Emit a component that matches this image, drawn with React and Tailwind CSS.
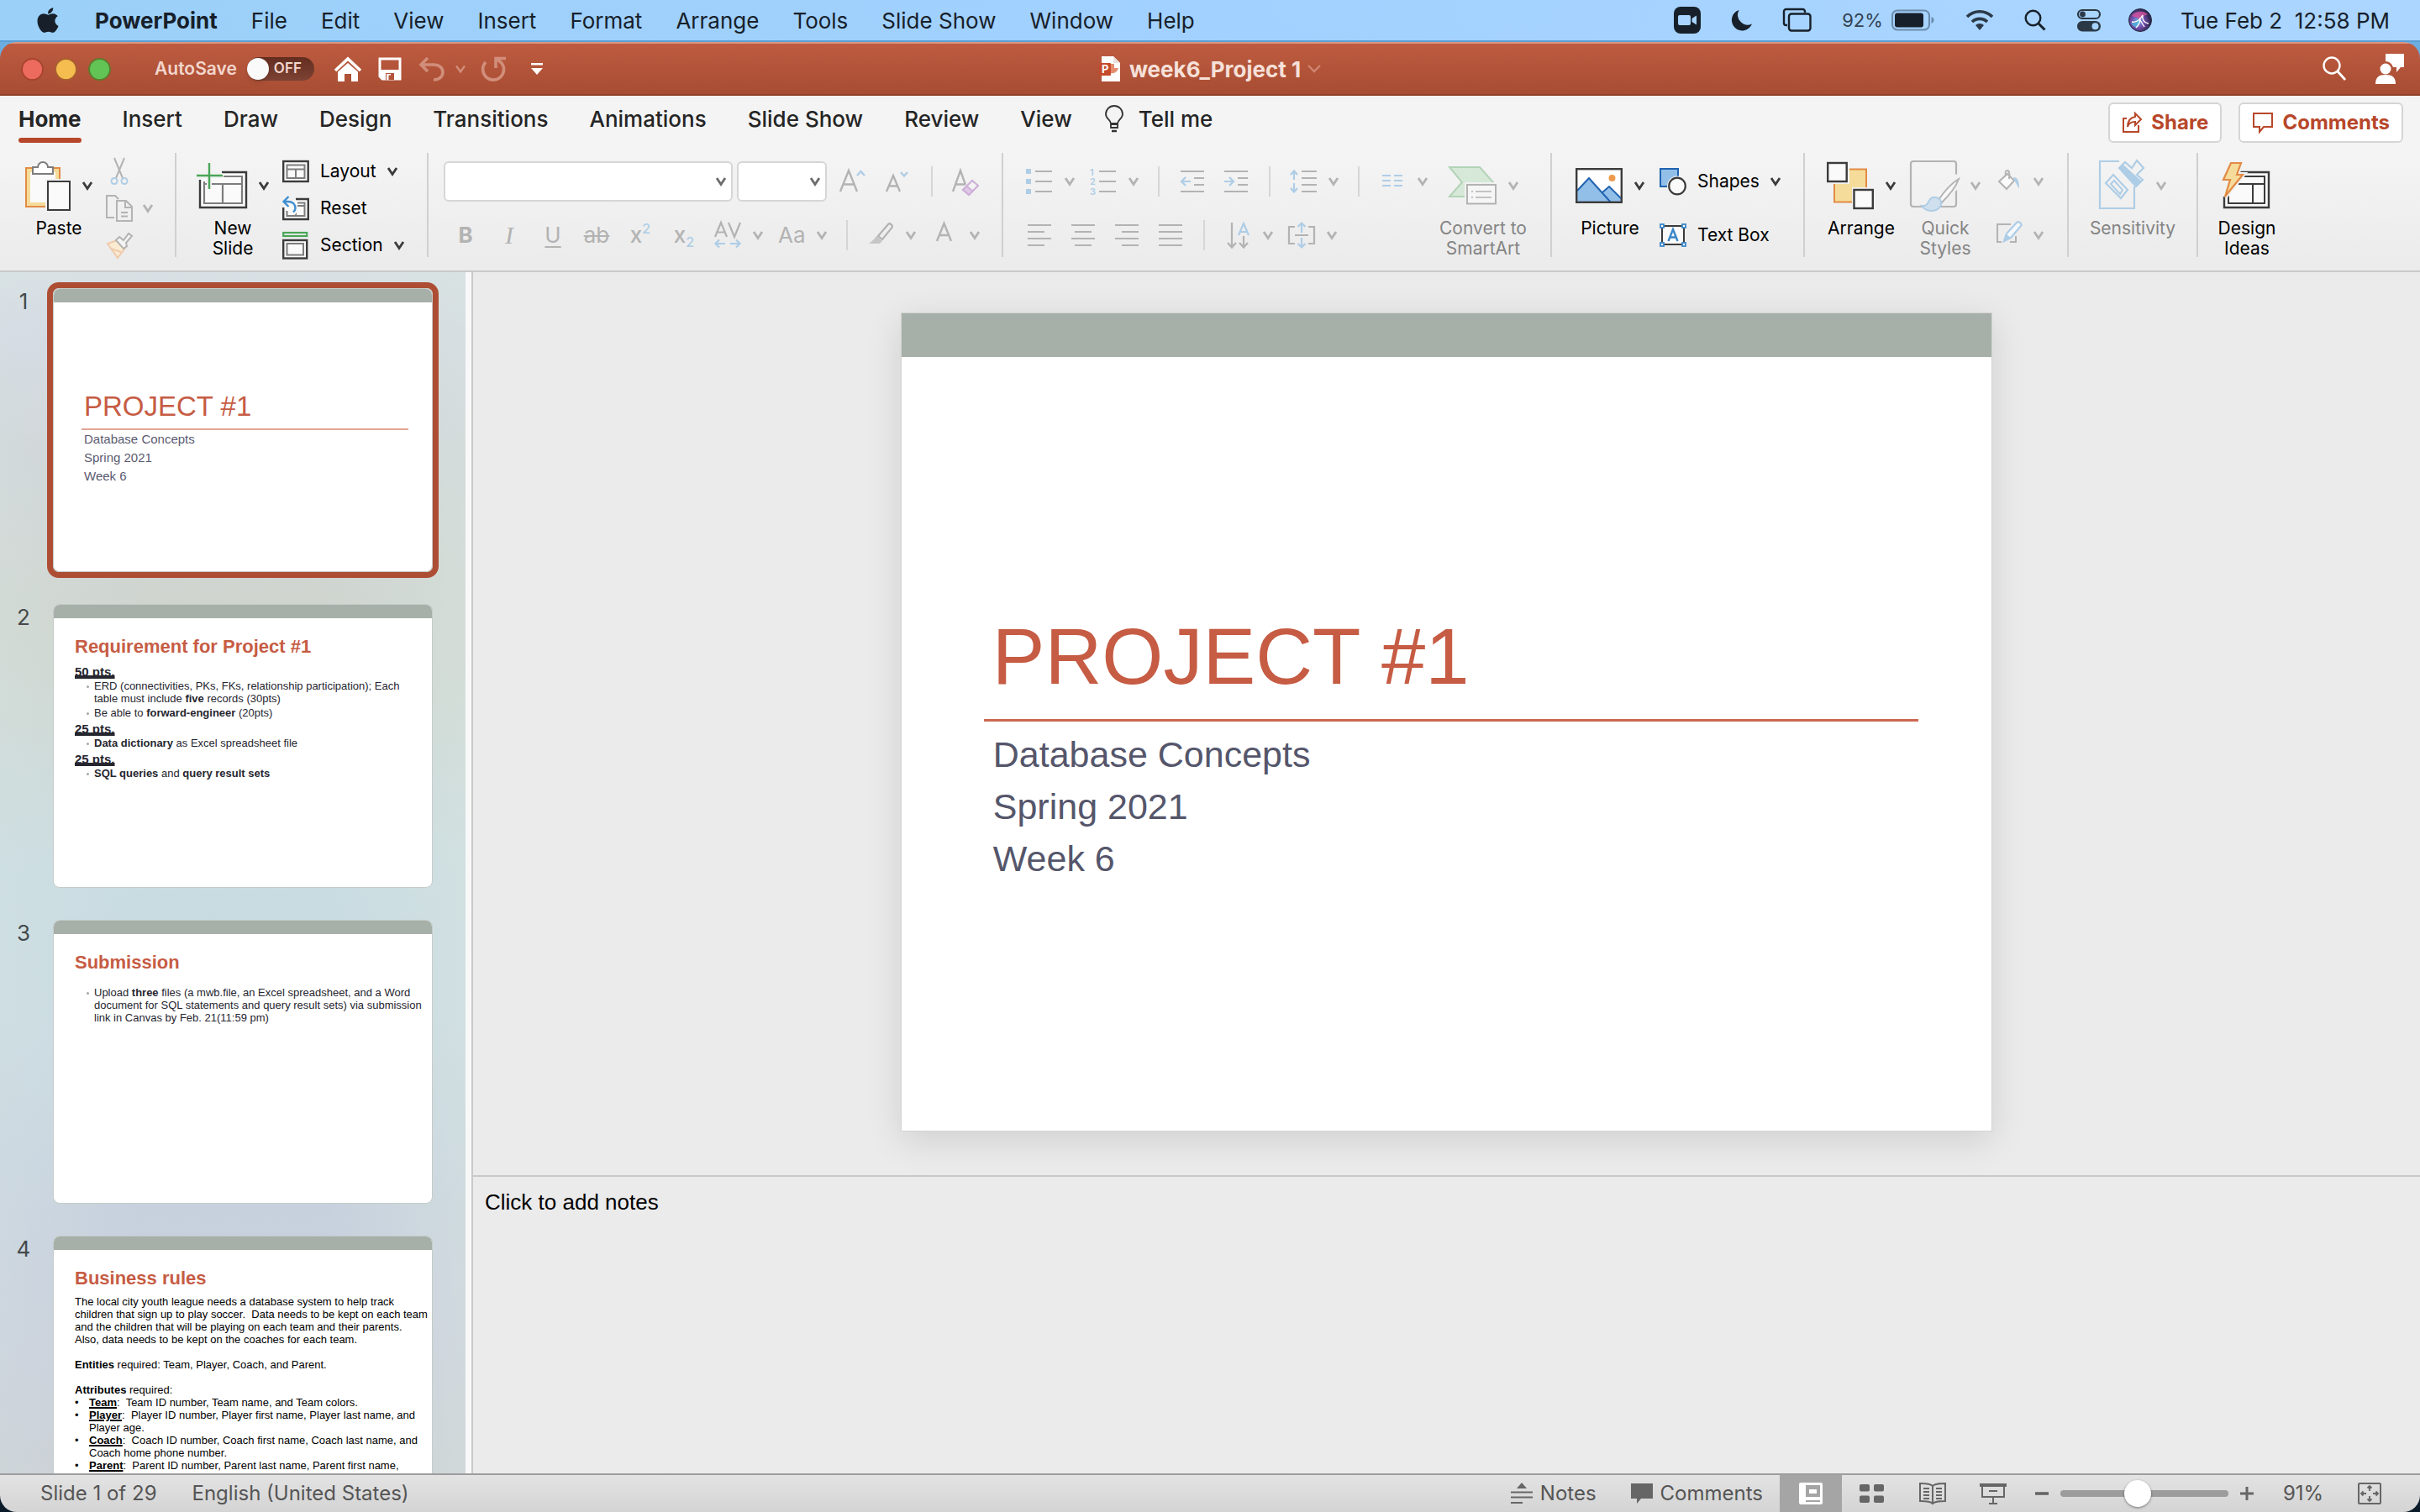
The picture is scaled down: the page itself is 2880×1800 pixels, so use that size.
import React from "react";
import { FaApple } from "react-icons/fa";

const GRAY = "#b3b3b3";
const PALE = "#aecde6";
const DARK = "#3b3b3b";

function Svg({ w = 32, h = 32, children, className = "" }) {
  return (
    <svg
      width={w}
      height={h}
      viewBox={`0 0 ${w} ${h}`}
      fill="none"
      aria-hidden="true"
      className={"shrink-0 overflow-visible " + className}
    >
      {children}
    </svg>
  );
}

function Chevron({ color = GRAY }) {
  return (
    <Svg w={12} h={10}>
      <path d="M1 1 6 8.500 11 1" stroke={color} strokeWidth="2.800" />
    </Svg>
  );
}

/* ---------- menu bar ---------- */

const MENUS = ["File", "Edit", "View", "Insert", "Format", "Arrange", "Tools", "Slide Show", "Window", "Help"];

function MenuBar() {
  return (
    <header className="flex h-[50px] shrink-0 items-center border-b-2 border-[#5b9fd6] bg-gradient-to-r from-[#9bd0f8] via-[#a2d1ff] to-[#acd6ff] pr-9 text-[26px] text-[#17202a]">
      <button aria-label="Apple menu" className="ml-[41px] flex w-8 justify-center">
        <FaApple size={34} />
      </button>
      <nav className="ml-10 flex items-center gap-10">
        <button className="font-bold">PowerPoint</button>
        {MENUS.map((m) => (
          <button key={m}>{m}</button>
        ))}
      </nav>
      <div className="ml-auto flex items-center">
        <Svg w={32} h={32}>
          <rect x="0" y="0" width="32" height="32" rx="8" fill="#17202a" />
          <rect x="5" y="10" width="15" height="12" rx="2" fill="#a8d4ff" />
          <path d="M21.500 14 27 10.500v11L21.500 18z" fill="#a8d4ff" />
        </Svg>
        <Svg w={26} h={26} className="ml-9">
          <path d="M9.500 1A12.500 12.500 0 1 0 25 17.500 12 12 0 0 1 9.500 1z" fill="#17202a" />
        </Svg>
        <Svg w={34} h={28} className="ml-9">
          <path d="M5 20H3.500A2.500 2.500 0 0 1 1 17.500V3.500A2.500 2.500 0 0 1 3.500 1h20A2.500 2.500 0 0 1 26 3.500V5" stroke="#17202a" strokeWidth="2.400" />
          <rect x="7" y="6.500" width="25.500" height="20" rx="3" stroke="#17202a" strokeWidth="2.400" />
        </Svg>
        <span className="ml-9 text-[22px] text-[#334252]">92%</span>
        <Svg w={52} h={26} className="ml-2.5">
          <rect x="1" y="1.500" width="44" height="23" rx="6" stroke="#6a8bab" strokeWidth="2" />
          <rect x="4" y="4.500" width="34" height="17" rx="3" fill="#17202a" />
          <path d="M47.500 9v8c2-.8 3-2.300 3-4s-1-3.200-3-4z" fill="#6a8bab" />
        </Svg>
        <Svg w={34} h={26} className="ml-9">
          <path d="M2 9a21 21 0 0 1 30 0M8 15a13 13 0 0 1 18 0" stroke="#2b3947" strokeWidth="3.600" />
          <path d="M17 25l-5-6a7 7 0 0 1 10 0z" fill="#2b3947" />
        </Svg>
        <Svg w={26} h={26} className="ml-9">
          <circle cx="10.500" cy="10.500" r="8.800" stroke="#17202a" strokeWidth="2.400" />
          <path d="M17 17l7.500 7.500" stroke="#17202a" strokeWidth="3" />
        </Svg>
        <Svg w={30} h={28} className="ml-9">
          <rect x="2" y="2" width="26" height="10" rx="5" stroke="#2b3947" strokeWidth="2.200" />
          <circle cx="7.500" cy="7" r="3.400" fill="#2b3947" />
          <rect x="1" y="15" width="28" height="12.500" rx="6.200" fill="#2b3947" />
          <circle cx="22.500" cy="21.200" r="4" fill="#a8d4ff" />
        </Svg>
        <svg width="28" height="28" viewBox="0 0 28 28" aria-hidden="true" className="ml-8 shrink-0">
          <defs>
            <radialGradient id="siri" cx="40%" cy="55%" r="60%">
              <stop offset="0" stopColor="#5fb8e8" />
              <stop offset="0.45" stopColor="#7a4fb0" />
              <stop offset="1" stopColor="#1f2142" />
            </radialGradient>
          </defs>
          <circle cx="14" cy="14" r="13.500" fill="url(#siri)" stroke="#2a2c45" />
          <path d="M4 9c4-6 13-7 19-2-4 1-7 3-9 7-3-3-6-4-10-5z" fill="#d5529b" opacity="0.8" />
          <path d="M3 17c4 1 7 0 11-3l-4 9c-4-1-6-3-7-6z" fill="#4cc3e6" opacity="0.7" />
          <path d="M4 16c5 1 9-1 13-8-1 6 2 9 7 10M9 23c4-3 5-7 5-12M14 14l5 8" stroke="#fff" strokeWidth="1.400" fill="none" />
        </svg>
        <span className="ml-[34px] whitespace-pre">Tue Feb 2  12:58 PM</span>
      </div>
    </header>
  );
}

/* ---------- title bar ---------- */

function TitleBar() {
  return (
    <div className="grid h-16 shrink-0 grid-cols-[1fr_auto_1fr] items-center border-t-2 border-b-2 border-t-[#dc9580] border-b-[#8f412b] bg-gradient-to-b from-[#be5b40] to-[#a74d33]">
      <div className="flex items-center">
        <div className="ml-[25px] flex gap-[13px]">
          <button aria-label="Close" className="size-[27px] rounded-full border-2 border-[#a8442f] bg-[#ed6a5e]" />
          <button aria-label="Minimize" className="size-[27px] rounded-full border-2 border-[#a8602f] bg-[#f5bd4f]" />
          <button aria-label="Zoom window" className="size-[27px] rounded-full border-2 border-[#5f7a2d] bg-[#61c454]" />
        </div>
        <label className="ml-[52px] flex items-center gap-3 text-[21px] font-semibold text-[#f3d6cd]">
          AutoSave
          <span className="flex h-7 w-20 items-center rounded-full bg-gradient-to-b from-[#632d20] to-[#7d4334]">
            <input type="checkbox" role="switch" className="size-[26px] appearance-none rounded-full bg-[#fafafa] shadow-md" />
            <span className="ml-1.5 text-[17px] font-semibold">OFF</span>
          </span>
        </label>
        <button aria-label="Home" className="ml-[23px]">
          <Svg w={34} h={30}>
            <path d="M2 17 17 3l15 14" stroke="#fff" strokeWidth="3.600" />
            <path d="M5 18.500 17 8l12 10.500V30h-8v-9h-8v9H5z" fill="#fff" />
          </Svg>
        </button>
        <button aria-label="Save" className="ml-[19px]">
          <Svg w={28} h={28}>
            <path d="M2 2h24v24H5l-3-3z" stroke="#fff" strokeWidth="3" />
            <path d="M2 15h24v11H5l-3-3z" fill="#fff" />
            <path d="M9 19h10v8H9z" fill="#b3543a" />
            <path d="M10 20h5v7h-5z" fill="#fff" />
            <path d="M12.500 21.500h3.500V27h-3.500z" fill="#b3543a" />
          </Svg>
        </button>
        <button aria-label="Undo" className="ml-5 flex items-center gap-3">
          <Svg w={32} h={30}>
            <path d="M11 2 3 10l8 8M3 10h15c7 0 11 4 11 9s-4 9-11 9" stroke="#d18e7b" strokeWidth="3.600" />
          </Svg>
          <Svg w={12} h={10}>
            <path d="M1 1.500 6 8.500 11 1.500" stroke="#d18e7b" strokeWidth="2.400" />
          </Svg>
        </button>
        <button aria-label="Redo" className="ml-[18px]">
          <Svg w={32} h={30}>
            <path d="M6 7A12.500 12.500 0 1 0 25 8L19 3" stroke="#d18e7b" strokeWidth="3.600" />
            <path d="M18 14V2.500h12" stroke="#d18e7b" strokeWidth="3.600" />
          </Svg>
        </button>
        <button aria-label="Customize toolbar" className="ml-[27px]">
          <Svg w={16} h={16}>
            <path d="M1 7h14l-7 8z" fill="#fff" />
            <rect x="1" y="1" width="14" height="2.500" fill="#fff" />
          </Svg>
        </button>
      </div>
      <div className="flex items-center">
        <Svg w={26} h={30}>
          <path d="M3 0h14l8 8v22H3z" fill="#fdfdfd" />
          <path d="M17 0v8h8z" fill="#e7e0dd" />
          <path d="M13 9v11a8 8 0 0 0 10-6h-5V9z" fill="#e58c6f" />
          <rect x="0" y="8" width="14" height="15" rx="1" fill="#c54a2b" />
          <text x="3" y="20" fontSize="13" fontWeight="700" fill="#fff" fontFamily="Inter, sans-serif">P</text>
        </Svg>
        <h1 className="ml-2.5 text-[26px] font-bold text-[#f6e0d9]">week6_Project 1</h1>
        <Svg w={16} h={10} className="ml-2">
          <path d="M1 1 8 8l7-7" stroke="#cf8672" strokeWidth="2.400" />
        </Svg>
      </div>
      <div className="flex items-center justify-end gap-[34px] pr-[18px]">
        <button aria-label="Search">
          <Svg w={28} h={30}>
            <circle cx="11" cy="11" r="9.500" stroke="#fff" strokeWidth="2.400" />
            <path d="M18 18l9 10" stroke="#fff" strokeWidth="2.800" />
          </Svg>
        </button>
        <button aria-label="Presence">
          <Svg w={36} h={36}>
            <path d="M13 0h22v16h-4l-5 6v-6h-4a9 9 0 0 0-9-7z" fill="#fff" />
            <circle cx="13" cy="18" r="6.500" fill="#fff" />
            <path d="M1 36c0-8 4-11 12-11s12 3 12 11z" fill="#fff" />
          </Svg>
        </button>
      </div>
    </div>
  );
}

/* ---------- ribbon tabs ---------- */

const TABS = ["Insert", "Draw", "Design", "Transitions", "Animations", "Slide Show", "Review", "View"];

function TabBar() {
  return (
    <div className="flex h-[68px] shrink-0 items-start bg-[#f4f4f4] pr-5 pl-[22px] text-[26px]">
      <nav className="flex gap-[49px] pt-2 text-[#252525]">
        <button className="flex flex-col gap-0.5 font-bold">
          <span className="leading-10">Home</span>
          <span className="h-1.5 w-full rounded-full bg-[#b7472a]" />
        </button>
        {TABS.map((t) => (
          <button key={t} className="h-10 leading-10 font-medium">
            {t}
          </button>
        ))}
      </nav>
      <button className="ml-[38px] flex items-center gap-[17px] pt-2 leading-10 font-medium text-[#252525]">
        <Svg w={24} h={32}>
          <path d="M8 21c0-4-6-6-6-11a10 10 0 0 1 20 0c0 5-6 7-6 11z" stroke="#333" strokeWidth="1.800" />
          <path d="M8 22h8v4H8z" stroke="#333" strokeWidth="1.800" />
          <path d="M9 30h6" stroke="#333" strokeWidth="2.400" />
        </Svg>
        Tell me
      </button>
      <div className="ml-auto flex gap-5 pt-2 font-bold text-[#b7472a]">
        <button className="flex h-12 items-center gap-2.5 rounded-md border-2 border-[#d5d5d5] bg-white px-3.5 text-[24px]">
          <Svg w={25} h={26}>
            <path d="M6 8H2v16h18v-8" stroke="#b7472a" strokeWidth="2" />
            <path d="M16 2l7 7-7 7v-4c-5 0-8 2-9 6 0-7 3-11 9-12z" stroke="#b7472a" strokeWidth="2" />
          </Svg>
          Share
        </button>
        <button className="flex h-12 items-center gap-2.5 rounded-md border-2 border-[#d5d5d5] bg-white px-3.5 text-[24px]">
          <Svg w={26} h={26}>
            <path d="M2 2h22v16H14l-5 6v-6H2z" stroke="#b7472a" strokeWidth="2" />
          </Svg>
          Comments
        </button>
      </div>
    </div>
  );
}

/* ---------- ribbon building blocks ---------- */

function Divider() {
  return <div className="h-[124px] w-0.5 shrink-0 bg-[#d0d0d0]" />;
}

function SmallDivider() {
  return <div className="mx-[23px] h-9 w-0.5 shrink-0 bg-[#d6d6d6]" />;
}

function Big({ icon, label, drop = true, disabled, className }) {
  return (
    <button
      className={
        "flex shrink-0 flex-col items-center text-[21px] leading-6 " +
        (disabled ? "text-[#848484] " : "text-black ") +
        className
      }
    >
      <span className="flex h-[78px] items-center gap-3.5">
        {icon}
        {drop && <Chevron color={disabled ? GRAY : DARK} />}
      </span>
      <span className="whitespace-pre">{label}</span>
    </button>
  );
}

function Row({ icon, label, drop, className = "h-11" }) {
  return (
    <button className={"flex items-center gap-[13px] text-[21px] text-black " + className}>
      {icon}
      {label}
      {drop && <Chevron color={DARK} />}
    </button>
  );
}

function Tool({ name, children, className = "w-8" }) {
  return (
    <button aria-label={name} className={"flex h-8 shrink-0 items-center justify-center " + className}>
      {children}
    </button>
  );
}

function Drop({ name, children }) {
  return (
    <button aria-label={name} className="flex h-8 shrink-0 items-center gap-[14px]">
      {children}
      <Chevron />
    </button>
  );
}

function Combo({ name, className }) {
  return (
    <div className={"grid h-12 shrink-0 items-center " + className}>
      <select
        aria-label={name}
        className="col-start-1 row-start-1 h-12 w-full appearance-none rounded-md border-2 border-[#d6d6d6] bg-white px-2 text-[21px]"
      >
        <option value=""></option>
      </select>
      <span className="pointer-events-none col-start-1 row-start-1 mr-2 justify-self-end">
        <Chevron color="#6b6b6b" />
      </span>
    </div>
  );
}

/* ---------- ribbon icons ---------- */

const PasteIcon = (
  <Svg w={54} h={60}>
    <rect x="1" y="9" width="40" height="46" fill="#f6dc9a" stroke="#e28b45" strokeWidth="2" />
    <path d="M6 14h30v36H6z" fill="#fafafa" />
    <path d="M9 8h6a6 6 0 0 1 12 0h6v8H9z" fill="#fff" stroke="#7d7d7d" strokeWidth="2" />
    <rect x="24" y="22" width="30" height="38" fill="#f2f2f2" />
    <rect x="27" y="25" width="26" height="34" fill="#fafafa" stroke={DARK} strokeWidth="2" />
  </Svg>
);
const CutIcon = (
  <Svg>
    <path d="M10 0l10 24M22 0L12 24" stroke={GRAY} strokeWidth="2" />
    <circle cx="10" cy="27.500" r="3.500" stroke={PALE} strokeWidth="2" />
    <circle cx="22" cy="27.500" r="3.500" stroke={PALE} strokeWidth="2" />
  </Svg>
);
const CopyIcon = (
  <Svg>
    <path d="M10 27H1V1h10l4 4" stroke={GRAY} strokeWidth="2" />
    <path d="M13 7h11l7 7v17H13zM23 7v8h8M18 21h8M18 25.500h8" stroke={GRAY} strokeWidth="2" />
  </Svg>
);
const PainterIcon = (
  <Svg>
    <path d="M2 14l12-4 9 9-9 12z" fill="#faebd2" stroke="#efcbac" strokeWidth="2" />
    <path d="M6 20l12 4" stroke="#efcbac" strokeWidth="2" />
    <path d="M12 10l4-4 5 4 6-8 4 3-7 8 1 4-4 3z" fill="#f4f4f4" stroke={GRAY} strokeWidth="2" />
  </Svg>
);
const NewSlideIcon = (
  <Svg w={60} h={54}>
    <path d="M30 11h29v42H4V20" fill="#fafafa" stroke={DARK} strokeWidth="2.400" />
    <path d="M32 16h22v32H9V22M9 25h45M31 25v23" stroke="#7d7d7d" strokeWidth="2.200" />
    <path d="M15 0v31M0 15h31" stroke="#f2f2f2" strokeWidth="6" />
    <path d="M15 0v31M0 15h31" stroke="#4aa658" strokeWidth="2.400" />
  </Svg>
);
const LayoutIcon = (
  <Svg w={32} h={28}>
    <rect x="1.200" y="2" width="29.500" height="24" fill="#fafafa" stroke={DARK} strokeWidth="2.400" />
    <path d="M5.500 6.500h21v15.500h-21zM5.500 11.500h21M16 11.500V22" stroke="#7d7d7d" strokeWidth="2" />
  </Svg>
);
const ResetIcon = (
  <Svg w={32} h={32}>
    <path d="M16 5h14.800v24H1.200V15" fill="#fafafa" stroke={DARK} strokeWidth="2.400" />
    <path d="M18 9.500h8.500V25h-21v-6M18 13h8M16 19v6" stroke="#7d7d7d" strokeWidth="2" />
    <path d="M2 8h5c6 0 8.500 4 8.500 8 0 2-1 4-3 6" stroke="#f4f4f4" strokeWidth="6" />
    <path d="M7.500 2 1.500 8l6 6M2 8h5c6 0 8.500 4 8.500 8 0 2-1 3-2.500 4.500" stroke="#3f8fd2" strokeWidth="2.400" />
  </Svg>
);
const SectionIcon = (
  <Svg w={32} h={34}>
    <rect x="1.200" y="2" width="28" height="4" stroke="#4aa658" strokeWidth="2.200" />
    <rect x="1.200" y="11" width="28" height="21.500" fill="#fafafa" stroke={DARK} strokeWidth="2.400" />
    <rect x="5.500" y="15" width="19.500" height="13.500" stroke="#7d7d7d" strokeWidth="2" />
  </Svg>
);
const SmartArtIcon = (
  <Svg w={58} h={46}>
    <path d="M2 1h36l16 18-14 17H2l15-17z" fill="#d6e9d8" stroke="#b2d3b7" strokeWidth="2" />
    <rect x="20" y="19" width="38" height="27" fill="#f1f1f1" />
    <rect x="23" y="22" width="34" height="22.500" fill="#f6f6f6" stroke={GRAY} strokeWidth="2" />
    <path d="M28 30h2M33 30h19M28 37h2M33 37h19" stroke="#c2c2c2" strokeWidth="2" />
  </Svg>
);
const PictureIcon = (
  <Svg w={56} h={42}>
    <rect x="1.200" y="1.200" width="53.600" height="39.600" fill="#fff" />
    <path d="M2 27 16 12l25 29H2z" fill="#92bfe8" />
    <path d="M32 29l8-7 14 14v5H42z" fill="#92bfe8" />
    <path d="M2 27 16 12l26 29M32 29l8-7 14 14" stroke="#1f63b0" strokeWidth="2" />
    <circle cx="43.500" cy="12" r="4" fill="#ee9a4d" />
    <rect x="1.200" y="1.200" width="53.600" height="39.600" stroke={DARK} strokeWidth="2.400" />
  </Svg>
);
const ShapesIcon = (
  <Svg w={32} h={34}>
    <rect x="1" y="2" width="21" height="21" fill="#92bfe8" stroke="#1f63b0" strokeWidth="2" />
    <circle cx="21" cy="22.500" r="12" fill="#f2f2f2" />
    <circle cx="21" cy="22.500" r="9.800" fill="#fafafa" stroke={DARK} strokeWidth="2.200" />
  </Svg>
);
const TextBoxIcon = (
  <Svg w={32} h={30}>
    <rect x="3" y="4" width="26" height="22" fill="#fafafa" stroke={DARK} strokeWidth="2" />
    <path d="M10.500 22 16 8l5.500 14M12.500 17.500h7" stroke="#3a87c9" strokeWidth="2.400" />
    <g fill="#fff" stroke="#3a87c9" strokeWidth="1.800">
      <rect x="1" y="2" width="4" height="4" />
      <rect x="27" y="2" width="4" height="4" />
      <rect x="1" y="24" width="4" height="4" />
      <rect x="27" y="24" width="4" height="4" />
    </g>
  </Svg>
);
const ArrangeIcon = (
  <Svg w={56} h={58}>
    <rect x="9" y="9.500" width="38" height="39" fill="#f6dc9a" stroke="#e28b45" strokeWidth="2" />
    <rect x="0" y="0" width="27" height="27" fill="#f2f2f2" />
    <rect x="1.200" y="2" width="22.500" height="22" fill="#fafafa" stroke={DARK} strokeWidth="2.400" />
    <rect x="30" y="31" width="26" height="27" fill="#f2f2f2" />
    <rect x="32.500" y="34" width="22.300" height="22" fill="#fafafa" stroke={DARK} strokeWidth="2.400" />
  </Svg>
);
const QuickStylesIcon = (
  <Svg w={58} h={62}>
    <rect x="1" y="2" width="54" height="54" rx="3" stroke={GRAY} strokeWidth="2.200" />
    <path d="M36 46 60 22" stroke="#f2f2f2" strokeWidth="14" />
    <path d="M58 23c-8 5-18 16-24 25l4 3c8-8 17-19 20-28z" fill="#f8f8f8" stroke={GRAY} strokeWidth="2" />
    <path d="M14 55c7 1 7-4 10-8 3-3 9-3 12 1 3 5 0 10-5 12-6 2-13 1-17-5z" fill="#cfdfee" stroke={PALE} strokeWidth="2" />
  </Svg>
);
const SensitivityIcon = (
  <Svg w={54} h={62}>
    <path d="M24 2H1v56h41V32" stroke={PALE} strokeWidth="2.200" />
    <path d="M8 28l9-10 17 18-8 10z" stroke={PALE} strokeWidth="2.200" />
    <path d="M14 29l4-4 10 11-3 5z" stroke={PALE} strokeWidth="2" />
    <path d="M24 10l7-7 8 7 6-9 8 9-8 8 7 6-8 8z" fill="#f2f2f2" stroke={PALE} strokeWidth="2.200" />
    <path d="M24 10l5-4 22 20-6 6z" fill={PALE} />
  </Svg>
);
const DesignIdeasIcon = (
  <Svg w={60} h={58}>
    <path d="M22 13h34v42H3V42" fill="#fafafa" stroke={DARK} strokeWidth="2.400" />
    <path d="M22 18h29v32H8V40M20 27h31M37 27v23" stroke={DARK} strokeWidth="2" />
    <path d="M11 2h12l-5 14h7L4 42l6-20H2z" fill="#f6dc9a" stroke="#f2f2f2" strokeWidth="6" />
    <path d="M11 2h12l-5 14h7L4 42l6-20H2z" fill="#f6dc9a" stroke="#e28b45" strokeWidth="2.200" />
  </Svg>
);

function AlignIcon({ d }) {
  return (
    <Svg w={28} h={28}>
      <path d={d} stroke={GRAY} strokeWidth="2.200" />
    </Svg>
  );
}

function Ribbon() {
  return (
    <div className="flex h-[142px] shrink-0 items-start overflow-hidden border-b-2 border-[#c9c9c9] bg-gradient-to-b from-[#f4f4f4] to-[#ebebeb]">
      {/* clipboard */}
      <Big icon={PasteIcon} label="Paste" className="ml-7 w-[84px]" />
      <div className="ml-3.5 flex w-[82px] flex-col">
        <button aria-label="Cut" className="flex h-11 items-center">{CutIcon}</button>
        <button aria-label="Copy" className="flex h-11 items-center gap-3">{CopyIcon}<Chevron /></button>
        <button aria-label="Format painter" className="flex h-11 items-center">{PainterIcon}</button>
      </div>
      <Divider />

      {/* slides */}
      <Big icon={NewSlideIcon} label={"New\nSlide"} className="ml-[22px] w-[90px]" />
      <div className="ml-3.5 flex w-[172px] flex-col">
        <Row icon={LayoutIcon} label="Layout" drop />
        <Row icon={ResetIcon} label="Reset" />
        <Row icon={SectionIcon} label="Section" drop />
      </div>
      <Divider />

      {/* font */}
      <div className="mt-2.5 ml-[18px] w-[664px] shrink-0">
        <div className="flex h-12 items-center">
          <Combo name="Font" className="w-[344px]" />
          <Combo name="Font size" className="ml-[5px] w-[107px]" />
          <Tool name="Increase font size" className="ml-[15px] w-8">
            <Svg>
              <path d="M1 28 11 3l10 25M4.500 19.500h13" stroke={GRAY} strokeWidth="2.400" />
              <path d="M21 9l4.500-5L30 9" stroke={PALE} strokeWidth="2.400" />
            </Svg>
          </Tool>
          <Tool name="Decrease font size" className="ml-[22px] w-8">
            <Svg>
              <path d="M2 28l8-19 8 19M5 21.500h10" stroke={GRAY} strokeWidth="2.400" />
              <path d="M19 5l4 4.500L27 5" stroke={PALE} strokeWidth="2.400" />
            </Svg>
          </Tool>
          <SmallDivider />
          <Tool name="Clear formatting">
            <Svg>
              <path d="M1 28 10 3l6 17M4.500 19.500h11" stroke={GRAY} strokeWidth="2.400" />
              <path d="M13 26 24 15l7 6-11 11z" fill="#f2f2f2" stroke="#cdb0d8" strokeWidth="2.200" />
              <path d="M13 26l4.500-4.500 7 6L20 32z" fill="#dfc9e6" stroke="#cdb0d8" strokeWidth="2" />
            </Svg>
          </Tool>
        </div>
        <div className="mt-4 flex h-12 items-center text-[26px] leading-8 text-[#b3b3b3]">
          <Tool name="Bold" className="w-[52px]"><span className="font-bold">B</span></Tool>
          <Tool name="Italic" className="w-[52px]"><span className="font-[Liberation_Serif] text-[30px] italic">I</span></Tool>
          <Tool name="Underline" className="w-[52px]"><span className="underline decoration-2 underline-offset-4">U</span></Tool>
          <Tool name="Strikethrough" className="w-[52px]"><span className="line-through decoration-2">ab</span></Tool>
          <Tool name="Superscript" className="w-[52px]">
            <span className="flex items-start font-medium">x<span className="text-[16px] leading-4 text-[#aecde6]">2</span></span>
          </Tool>
          <Tool name="Subscript" className="w-[52px]">
            <span className="flex items-end font-medium">x<span className="text-[16px] leading-4 text-[#aecde6]">2</span></span>
          </Tool>
          <div className="ml-2.5 flex items-center gap-[18px]">
            <Drop name="Character spacing">
              <Svg w={32} h={34}>
                <path d="M1 19 8 2l7 17M3.500 13.500h9M17 2l7 17 7-17" stroke={GRAY} strokeWidth="2.200" />
                <path d="M2 27h11M6 22.500 1.500 27 6 31.500M19 27h11M26 22.500l4.500 4.500-4.500 4.500" stroke={PALE} strokeWidth="2.200" />
              </Svg>
            </Drop>
            <Drop name="Change case"><span className="w-8">Aa</span></Drop>
          </div>
          <SmallDivider />
          <div className="flex items-center gap-[18px]">
            <Drop name="Highlight color">
              <Svg>
                <path d="M13 17 25 3c2-2 6 1 4.500 4L18 21z" stroke={GRAY} strokeWidth="2.200" />
                <path d="M11 17l7 6-3 3H2l6-5z" fill="#c6c6c6" />
              </Svg>
            </Drop>
            <Drop name="Font color">
              <Svg>
                <path d="M7 23 15.500 2 24 23M10.500 16h10" stroke={GRAY} strokeWidth="2.400" />
              </Svg>
            </Drop>
          </div>
        </div>
      </div>
      <Divider />

      {/* paragraph */}
      <div className="mt-2.5 ml-[27px] shrink-0">
        <div className="flex h-12 items-center">
          <div className="flex gap-[18px]">
            <Drop name="Bullets">
              <Svg>
                <path d="M0 4h6M0 16h6M0 28h6" stroke={PALE} strokeWidth="6" />
                <path d="M11 4h20M11 16h20M11 28h20" stroke={GRAY} strokeWidth="2.200" />
              </Svg>
            </Drop>
            <Drop name="Numbering">
              <Svg>
                <text x="0" y="9" fontSize="11" fontWeight="600" fontFamily="Inter, sans-serif" fill={PALE}>1</text>
                <text x="0" y="20" fontSize="11" fontWeight="600" fontFamily="Inter, sans-serif" fill={PALE}>2</text>
                <text x="0" y="32" fontSize="11" fontWeight="600" fontFamily="Inter, sans-serif" fill={PALE}>3</text>
                <path d="M11 4h20M11 16h20M11 28h20" stroke={GRAY} strokeWidth="2.200" />
              </Svg>
            </Drop>
          </div>
          <SmallDivider />
          <div className="flex gap-5">
            <Tool name="Decrease indent">
              <Svg>
                <path d="M2 4h28M18 12h12M18 20h12M2 28h28" stroke={GRAY} strokeWidth="2.200" />
                <path d="M3 16h11M8 11l-5 5 5 5" stroke={PALE} strokeWidth="2.200" />
              </Svg>
            </Tool>
            <Tool name="Increase indent">
              <Svg>
                <path d="M2 4h28M18 12h12M18 20h12M2 28h28" stroke={GRAY} strokeWidth="2.200" />
                <path d="M2 16h11M8 11l5 5-5 5" stroke={PALE} strokeWidth="2.200" />
              </Svg>
            </Tool>
          </div>
          <SmallDivider />
          <Drop name="Line spacing">
            <Svg>
              <path d="M14 4h18M14 12h18M14 20h18M14 28h18" stroke={GRAY} strokeWidth="2.200" />
              <path d="M5 3v11M1 8l4-4.500L9 8M5 18v11M1 24l4 4.500L9 24" stroke={PALE} strokeWidth="2.200" />
            </Svg>
          </Drop>
          <SmallDivider />
          <Drop name="Columns">
            <Svg>
              <path d="M4 9h10M4 15h10M4 21h10M18 9h10M18 15h10M18 21h10" stroke={PALE} strokeWidth="2.200" />
            </Svg>
          </Drop>
        </div>
        <div className="mt-4 flex h-12 items-center">
          <div className="flex gap-5">
            <Tool name="Align left"><AlignIcon d="M0 2h28M0 10h20M0 18h28M0 26h20" /></Tool>
            <Tool name="Center"><AlignIcon d="M0 2h28M4 10h20M0 18h28M4 26h20" /></Tool>
            <Tool name="Align right"><AlignIcon d="M0 2h28M8 10h20M0 18h28M8 26h20" /></Tool>
            <Tool name="Justify"><AlignIcon d="M0 2h28M0 10h28M0 18h28M0 26h28" /></Tool>
          </div>
          <SmallDivider />
          <div className="flex gap-[18px]">
            <Drop name="Text direction">
              <Svg>
                <path d="M9 1v29M4 25l5 5.500 5-5.500M23 17v13M18 25l5 5.500 5-5.500" stroke={GRAY} strokeWidth="2.200" />
                <path d="M17 16 23 2l6 14M19 12h8" stroke={PALE} strokeWidth="2.200" />
              </Svg>
            </Drop>
            <Drop name="Align text">
              <Svg>
                <path d="M8 6H1v20h7M24 6h7v20h-7M8 16h16" stroke={GRAY} strokeWidth="2.200" />
                <path d="M16 13V2M11.500 6 16 1.500 20.500 6M16 19v11M11.500 26l4.500 4.500 4.500-4.500" stroke={PALE} strokeWidth="2.200" />
              </Svg>
            </Drop>
          </div>
        </div>
      </div>
      <Big icon={SmartArtIcon} label={"Convert to\nSmartArt"} disabled className="mr-5 ml-1.5 w-[120px]" />
      <Divider />

      {/* insert */}
      <Big icon={PictureIcon} label="Picture" className="ml-6 w-[90px]" />
      <div className="mt-2.5 ml-3.5 flex w-[171px] flex-col gap-4">
        <Row icon={ShapesIcon} label="Shapes" drop className="h-12" />
        <Row icon={TextBoxIcon} label="Text Box" className="h-12" />
      </div>
      <Divider />

      {/* drawing */}
      <Big icon={ArrangeIcon} label="Arrange" className="ml-[21px] w-[92px]" />
      <Big icon={QuickStylesIcon} label={"Quick\nStyles"} disabled className="ml-2 w-[92px]" />
      <div className="mt-2.5 ml-[13px] flex w-[86px] flex-col items-start gap-4">
        <div className="flex h-12 items-center">
          <Drop name="Shape fill">
            <Svg>
              <path d="M5 16 15 7l8 8-9 10z" fill="#fafafa" stroke={GRAY} strokeWidth="2" />
              <path d="M13 9c-1-4 0-6 2-6s3 3 2 10" stroke={GRAY} strokeWidth="2" />
              <path d="M22 11c5 0 7 4 7 13-2-1-3-6-6-9z" fill={PALE} />
            </Svg>
          </Drop>
        </div>
        <div className="flex h-12 items-center">
          <Drop name="Shape outline">
            <Svg>
              <path d="M19 3H3v21h5M25 17v7h-7" stroke={GRAY} strokeWidth="2" />
              <path d="M11 23l3-9L26 1c2-2 7 1 5 4L19 19z" fill="#f4f8fb" stroke={PALE} strokeWidth="2.200" />
              <path d="M11 23l3-8 5 4z" fill={PALE} />
            </Svg>
          </Drop>
        </div>
      </div>
      <Divider />
      <Big icon={SensitivityIcon} label="Sensitivity" disabled className="mr-5 ml-5 w-[112px]" />
      <Divider />
      <Big icon={DesignIdeasIcon} label={"Design\nIdeas"} drop={false} className="ml-[18px] w-20" />
    </div>
  );
}

/* ---------- slide thumbnails ---------- */

function Thumb({ n, selected, children }) {
  return (
    <li className="flex h-[352px] shrink-0">
      <span className="w-14 pt-[7px] text-center text-[26px] leading-8 text-[#444a4c]">{n}</span>
      <div
        className={
          "w-[466px] rounded-[14px] border-[7px] " + (selected ? "border-[#ad4e34]" : "border-transparent")
        }
      >
        <div className="h-full overflow-hidden rounded-lg border border-[#c6cbca] bg-white font-[Liberation_Sans] text-[13px] leading-[15px] text-[#26262f]">
          <div className="h-4 bg-[#a6b0a8]" />
          {children}
        </div>
      </div>
    </li>
  );
}

function ThumbTitle({ children }) {
  return <h2 className="mt-[22px] pl-[25px] text-[22px] leading-6 font-bold text-[#c65c44]">{children}</h2>;
}

function Points({ children }) {
  return (
    <h3 className="mt-1 w-max text-[15px] leading-[15px] font-bold underline decoration-4 underline-offset-[-1px] [text-decoration-skip-ink:none]">
      {children}
    </h3>
  );
}

function Bullet({ children }) {
  return (
    <li className="mt-0.5 flex gap-1.5 whitespace-pre">
      <span className="mt-[7px] size-[3px] shrink-0 rounded-full bg-[#a3a8a5]" />
      <span>{children}</span>
    </li>
  );
}

function Attribute({ name, children }) {
  return (
    <li className="flex whitespace-pre">
      <span className="w-[17px]">•</span>
      <span>
        <b className="underline decoration-2">{name}</b>:{"  "}
        {children}
      </span>
    </li>
  );
}

function Sidebar() {
  return (
    <aside className="w-[554px] shrink-0 overflow-hidden bg-[linear-gradient(90deg,rgba(216,228,228,0.35),transparent_30%,transparent_70%,rgba(216,228,224,0.5)),linear-gradient(180deg,#d8e0e4_0%,#d4d9e3_5%,#d0d4d7_14%,#cfd5cd_30%,#cdd8d4_38%,#c9dce2_50%,#c9dbe2_62%,#c7d1de_78%,#c8cedb_90%,#c9cdd3_100%)]">
      <ol className="flex flex-col gap-6 pt-3">
        <Thumb n="1" selected>
          <h2 className="mt-[106px] pl-9 text-[33px] leading-9 text-[#c65c44]">PROJECT #1</h2>
          <div className="mt-2 mr-7 ml-[33px] h-0.5 bg-[#e2a595]" />
          <p className="pl-9 text-[15px] leading-[22px] text-[#5b5b70]">
            Database Concepts
            <br />
            Spring 2021
            <br />
            Week 6
          </p>
        </Thumb>
        <Thumb n="2">
          <ThumbTitle>Requirement for Project #1</ThumbTitle>
          <div className="mt-2.5 pl-[25px]">
            <Points>50 pts.</Points>
            <ul className="pl-[14px]">
              <Bullet>{"ERD (connectivities, PKs, FKs, relationship participation); Each\ntable must include "}<b>five</b>{" records (30pts)"}</Bullet>
              <Bullet>Be able to <b>forward-engineer</b> (20pts)</Bullet>
            </ul>
            <Points>25 pts.</Points>
            <ul className="pl-[14px]">
              <Bullet><b>Data dictionary</b> as Excel spreadsheet file</Bullet>
            </ul>
            <Points>25 pts.</Points>
            <ul className="pl-[14px]">
              <Bullet><b>SQL queries</b> and <b>query result sets</b></Bullet>
            </ul>
          </div>
        </Thumb>
        <Thumb n="3">
          <ThumbTitle>Submission</ThumbTitle>
          <ul className="mt-4 pl-[39px]">
            <Bullet>
              Upload <b>three</b>
              {" files (a mwb.file, an Excel spreadsheet, and a Word\ndocument for SQL statements and query result sets) via submission\nlink in Canvas by Feb. 21(11:59 pm)"}
            </Bullet>
          </ul>
        </Thumb>
        <Thumb n="4">
          <ThumbTitle>Business rules</ThumbTitle>
          <div className="mt-2 pl-[25px] whitespace-pre text-black">
            <p>
              {"The local city youth league needs a database system to help track\nchildren that sign up to play soccer.  Data needs to be kept on each team\nand the children that will be playing on each team and their parents.\nAlso, data needs to be kept on the coaches for each team."}
            </p>
            <p className="mt-[15px]"><b>Entities</b> required: Team, Player, Coach, and Parent.</p>
            <p className="mt-[15px]"><b>Attributes</b> required:</p>
            <ul>
              <Attribute name="Team">Team ID number, Team name, and Team colors.</Attribute>
              <Attribute name="Player">{"Player ID number, Player first name, Player last name, and\nPlayer age."}</Attribute>
              <Attribute name="Coach">{"Coach ID number, Coach first name, Coach last name, and\nCoach home phone number."}</Attribute>
              <Attribute name="Parent">{"Parent ID number, Parent last name, Parent first name,\nHome phone number, and Home Address (Street, City, State, and ZIP"}</Attribute>
            </ul>
          </div>
        </Thumb>
      </ol>
    </aside>
  );
}

/* ---------- editor ---------- */

function Editor() {
  return (
    <main className="flex min-w-0 flex-1 flex-col bg-[#ebebeb]">
      <div className="flex min-h-0 flex-1 items-center justify-center pb-1">
        <article className="aspect-[4/3] h-[91%] border border-[#d4d4d4] bg-white font-[Liberation_Sans] shadow-[0_10px_40px_rgba(0,0,0,0.12)]">
          <div className="h-[52px] bg-[#a6b0a8]" />
          <h2 className="mt-[309px] pl-[108px] text-[94px] leading-[96px] text-[#c65c44]">PROJECT #1</h2>
          <div className="mt-[26px] mr-[87px] ml-[98px] h-[3px] bg-[#cc6750]" />
          <p className="mt-2 pl-[109px] text-[43px] leading-[62px] text-[#55566b]">
            Database Concepts
            <br />
            Spring 2021
            <br />
            Week 6
          </p>
        </article>
      </div>
      <div className="h-[355px] shrink-0 border-t-2 border-[#c8c8c8]">
        <textarea
          aria-label="Notes"
          placeholder="Click to add notes"
          className="block h-full w-full resize-none bg-transparent px-[14px] py-3.5 font-[Liberation_Sans] text-[26px] leading-8 outline-none placeholder:text-black"
        />
      </div>
    </main>
  );
}

/* ---------- status bar ---------- */

function StatusBar() {
  const c = "#666";
  return (
    <footer className="flex h-[46px] shrink-0 items-center border-t-2 border-[#9d9d9d] bg-gradient-to-b from-[#e3e3e3] to-[#d4d4d4] pr-[46px] pl-12 text-[24px] text-[#555]">
      <span>Slide 1 of 29</span>
      <button className="ml-[42px]">English (United States)</button>
      <div className="ml-auto flex h-full items-center">
        <button className="flex items-center gap-2">
          <Svg w={28} h={28}>
            <path d="M14 1l6 7H8z" fill={c} />
            <path d="M1 12.500h26M1 18.500h26M1 25h14" stroke={c} strokeWidth="2.200" />
          </Svg>
          Notes
        </button>
        <button className="ml-10 flex items-center gap-2">
          <Svg w={28} h={26}>
            <path d="M1 1h26v18H13l-5 6v-6H1z" fill={c} />
          </Svg>
          Comments
        </button>
        <button aria-label="Normal view" className="ml-5 flex h-full w-[74px] items-center justify-center bg-[#a5a5a5]">
          <Svg w={28} h={28}>
            <rect x="0" y="1" width="28" height="26" rx="2" fill="#fff" />
            <path d="M8 4h17v14H8zM8 22h17v2H8z" fill="#a5a5a5" />
            <rect x="12" y="9" width="9" height="5" fill="#fff" />
          </Svg>
        </button>
        <button aria-label="Slide sorter" className="flex w-[72px] justify-center">
          <Svg w={30} h={24}>
            <g fill={c}>
              <rect x="0" y="1" width="12" height="8.500" rx="2" />
              <rect x="17" y="1" width="12" height="8.500" rx="2" />
              <rect x="0" y="14.500" width="12" height="8.500" rx="2" />
              <rect x="17" y="14.500" width="12" height="8.500" rx="2" />
            </g>
          </Svg>
        </button>
        <button aria-label="Reading view" className="flex w-[72px] justify-center">
          <Svg w={32} h={28}>
            <path d="M16 5c-3-3-8-3-15-3v21c7 0 12 0 15 3 3-3 8-3 15-3V2c-7 0-12 0-15 3zM16 5v21" stroke={c} strokeWidth="2" />
            <path d="M5 8h7M5 12h7M5 16h7M5 20h7M20 8h7M20 12h7M20 16h7M20 20h7" stroke={c} strokeWidth="1.800" />
          </Svg>
        </button>
        <button aria-label="Slide show" className="flex w-[72px] justify-center">
          <Svg w={32} h={28}>
            <path d="M0 4h32" stroke={c} strokeWidth="4" />
            <path d="M3 5v13h26V5M11 11h10M16 18v7M11 26h10" stroke={c} strokeWidth="2" />
          </Svg>
        </button>
        <button aria-label="Zoom out" className="ml-[14px]">
          <Svg w={16} h={16}><path d="M0 8h16" stroke={c} strokeWidth="3.600" /></Svg>
        </button>
        <input
          type="range"
          aria-label="Zoom"
          min="0"
          max="100"
          defaultValue="45"
          className="mx-[14px] h-2 w-[200px] appearance-none rounded-full bg-[#9c9c9c] [&::-webkit-slider-thumb]:size-8 [&::-webkit-slider-thumb]:appearance-none [&::-webkit-slider-thumb]:rounded-full [&::-webkit-slider-thumb]:bg-white [&::-webkit-slider-thumb]:shadow-[0_1px_3px_rgba(0,0,0,0.45)]"
        />
        <button aria-label="Zoom in">
          <Svg w={16} h={16}><path d="M0 8h16M8 0v16" stroke={c} strokeWidth="3" /></Svg>
        </button>
        <button className="ml-[34px] w-[50px] whitespace-nowrap">91%</button>
        <button aria-label="Fit slide to window" className="ml-10">
          <Svg w={28} h={28}>
            <rect x="1" y="2" width="26" height="24" rx="1" stroke={c} strokeWidth="2" />
            <path d="M14 5v6M14 17v6M4 14h6M18 14h6M11.500 7.500 14 5l2.500 2.500M11.500 20.500 14 23l2.500-2.500M6.500 11.500 4 14l2.500 2.500M21.500 11.500 24 14l-2.500 2.500" stroke={c} strokeWidth="1.800" />
          </Svg>
        </button>
      </div>
    </footer>
  );
}

export default function App() {
  return (
    <div className="flex h-screen flex-col overflow-hidden bg-gradient-to-b from-[#6fb3e6] to-[#0b1a28] font-[Inter,sans-serif]">
      <MenuBar />
      <div className="flex min-h-0 flex-1 flex-col overflow-hidden rounded-[20px]">
        <TitleBar />
        <TabBar />
        <Ribbon />
        <div className="flex min-h-0 flex-1">
          <Sidebar />
          <div className="w-[9px] shrink-0 border-r-2 border-[#c9c9c9] bg-[#f8f8f8]" />
          <Editor />
        </div>
        <StatusBar />
      </div>
    </div>
  );
}
